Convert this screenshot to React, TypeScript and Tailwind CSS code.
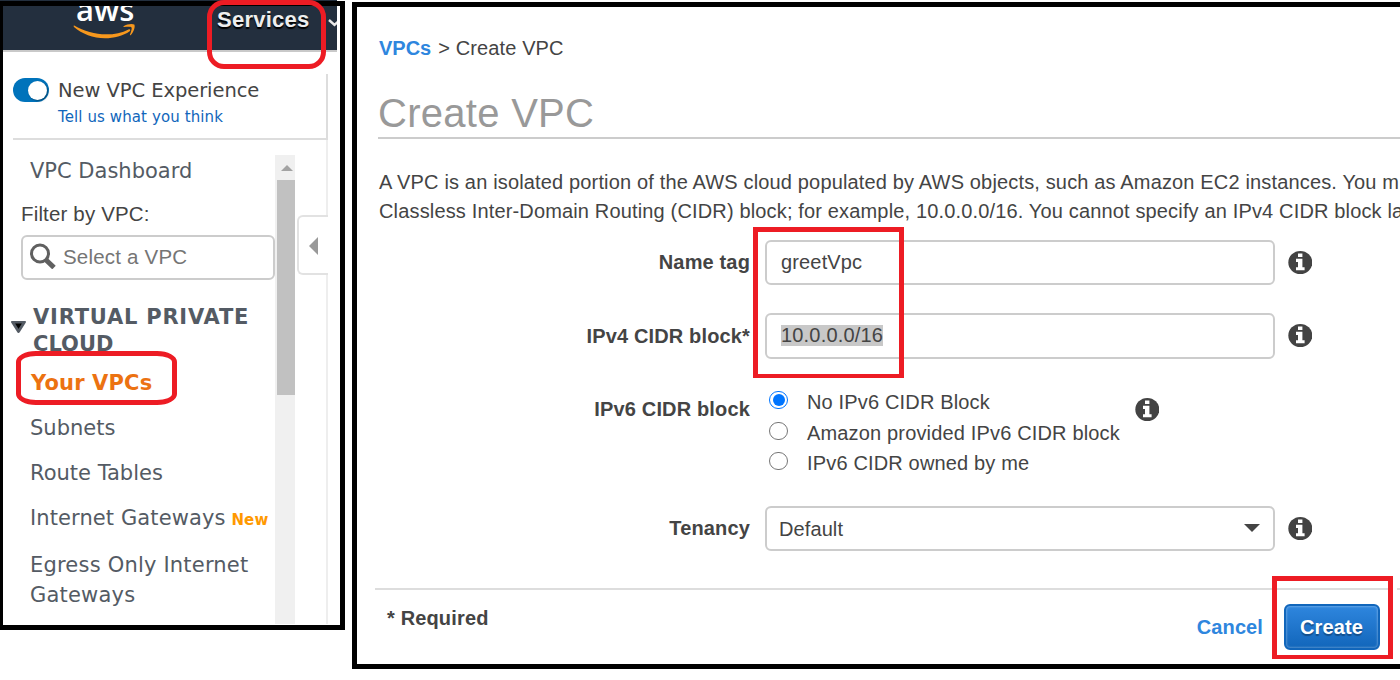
import type { ReactNode } from 'react';

function InfoIcon({ className = '' }: { className?: string }) {
  return (
    <svg className={`h-6 w-6 shrink-0 ${className}`} viewBox="0 0 24 24">
      <ellipse cx="12.300" cy="11.500" rx="12" ry="11.500" fill="#434343" />
      <path d="M10 2.400h4.400v3.600H10zM8 7.800h6.400v8.400H16.600V19.300H8v-3.100h2v-5.200H8z" fill="#fff" />
    </svg>
  );
}

function Highlight({ className }: { className: string }) {
  return <div className={`pointer-events-none absolute border-[5px] border-[#ed1c24] ${className}`} />;
}

function TopNav() {
  return (
    <header className="relative h-[46px] w-[334px] shrink-0 overflow-hidden border-b-2 border-[#c9c9c9] bg-[#232f3e]">
      <span className="absolute -top-[12px] left-[73px] font-['Open_Sans',sans-serif] text-[31px] leading-[30px] font-semibold text-white">
        aws
      </span>
      <svg className="absolute top-[16px] left-[70px] h-[18px] w-[64px]" viewBox="0 0 64 18">
        <path
          d="M1.2 3.6C18 14 41 15 55.500 7.400c1.600-.7 2.400.8 1.200 1.800C50 14 41 16.200 32 16.200 20 16.200 9 12 1 5 .4 4.200.7 3.400 1.200 3.600z"
          fill="#f7981d"
        />
        <path
          d="M50.600 4.300c3-2.200 8.500-2.900 10.700-1.800 1.200 2.200-.6 7.800-3.600 10.600-.5.400-1 .2-.8-.4.800-2.200 2.300-5.900 1.600-7.300-.8-1-4.800-.7-7.300-.4-.8.100-1.100-.3-.6-.7z"
          fill="#f7981d"
        />
      </svg>
      <span className="absolute top-0 left-[214px] font-['Liberation_Sans',sans-serif] text-[22px] leading-[27px] font-bold tracking-[0.250px] text-[#eee] [text-shadow:0_2px_1px_#000]">
        Services
      </span>
      <svg className="absolute top-[12px] left-[325px] h-[10px] w-[14px]" viewBox="0 0 14 10">
        <path d="M1 2l5.500 5L12 2" fill="none" stroke="#e8e8e8" strokeWidth="2.400" />
      </svg>
    </header>
  );
}

function NavItem({ children, className = '' }: { children: ReactNode; className?: string }) {
  return <a className={`block whitespace-nowrap text-[21px] leading-[30px] text-[#545b64] ${className}`}>{children}</a>;
}

function Sidebar() {
  return (
    <div className="flex h-[573px] w-[337px] font-['DejaVu_Sans',sans-serif]">
      <div className="flex w-[325px] shrink-0 flex-col">
        <div className="mt-[22px] ml-[10px] flex h-[66px] border-r-2 border-b-2 border-[#ddd]">
          <div className="mt-[4px] flex h-6 w-9 shrink-0 items-center justify-end rounded-full bg-[#0073bb] pr-[2px]">
            <div className="h-[19px] w-[19px] rounded-full bg-white shadow-[1px_1px_2px_rgba(0,0,0,0.4)]" />
          </div>
          <div className="ml-[9px]">
            <div className="mt-[5px] text-[19.500px] leading-6 tracking-[-0.060px] whitespace-nowrap text-[#444]">
              New VPC Experience
            </div>
            <a className="mt-[4px] block text-[15px] leading-5 tracking-[0.100px] text-[#1166bb]">Tell us what you think</a>
          </div>
        </div>
        <div className="flex grow">
          <nav className="w-[272px] shrink-0">
            <NavItem className="mt-[16px] ml-[27px]">VPC Dashboard</NavItem>
            <div className="mt-[16px] ml-[18px] font-['Liberation_Sans',sans-serif] text-[20.500px] leading-6 tracking-[0.160px] text-[#444]">
              Filter by VPC:
            </div>
            <div className="mt-[9px] ml-[18px] flex h-[45px] w-[254px] items-center rounded-[6px] border-2 border-[#ccc]">
              <svg className="mt-[-4px] ml-[7px] h-[26px] w-[26px]" viewBox="0 0 26 26">
                <circle cx="10" cy="10.500" r="8.500" fill="none" stroke="#606060" strokeWidth="3" />
                <path d="M15.500 16.500l8.500 8" stroke="#606060" strokeWidth="5" />
              </svg>
              <span className="ml-[7px] font-['Liberation_Sans',sans-serif] text-[20.500px] tracking-[0.200px] text-[#757575]">
                Select a VPC
              </span>
            </div>
            <div className="mt-[24px] flex">
              <svg className="mt-[17px] ml-[8px] h-[12px] w-[15px]" viewBox="0 0 15 12">
                <path d="M1.500 1h12L7.500 10.500z" fill="#000" stroke="#545b64" strokeWidth="2.800" strokeLinejoin="round" />
              </svg>
              <div className="ml-[7px] text-[21px] leading-[27px] font-bold text-[#545b64]">
                <div className="tracking-[0.780px] whitespace-nowrap">VIRTUAL PRIVATE</div>
                <div>CLOUD</div>
              </div>
            </div>
            <a className="mt-[10px] ml-[28px] block text-[21px] leading-[30px] font-bold tracking-[0.160px] text-[#ec7211]">
              Your VPCs
            </a>
            <NavItem className="mt-[15px] ml-[27px]">Subnets</NavItem>
            <NavItem className="mt-[15px] ml-[27px]">Route Tables</NavItem>
            <NavItem className="mt-[15px] ml-[27px] tracking-[0.100px]">
              Internet Gateways
              <b className="ml-[6px] text-[15px] text-[#ff9900]">New</b>
            </NavItem>
            <NavItem className="mt-[15px] ml-[27px] tracking-[0.200px]">
              Egress Only Internet
              <br />
              Gateways
            </NavItem>
          </nav>
          <div className="mt-[15px] mb-px flex w-5 flex-col bg-[#f0f0f0]">
            <svg className="mt-[10px] ml-[6px] h-[6px] w-[12px]" viewBox="0 0 12 6">
              <path d="M6 0l6 6H0z" fill="#a3a3a3" />
            </svg>
            <div className="mt-[9px] ml-[2px] h-[215px] bg-[#c1c1c1]" />
          </div>
          <div className="flex w-[33px] shrink-0 flex-col">
            <div className="h-[75px] border-r-2 border-[#eee]" />
            <div className="ml-[2px] flex h-[60px] items-center rounded-l-[6px] border-2 border-r-0 border-[#e2e2e2] pl-[10px]">
              <svg className="mt-px h-[18px] w-[9px]" viewBox="0 0 9 18">
                <path d="M9 0v18L0 9z" fill="#999" />
              </svg>
            </div>
            <div className="mb-px grow border-r-2 border-[#eee]" />
          </div>
        </div>
      </div>
    </div>
  );
}

function Field({ label, className, children }: { label: string; className: string; children: ReactNode }) {
  return (
    <div className={`flex items-center ${className}`}>
      <div className="mb-px w-[393px] shrink-0 text-right font-bold tracking-[0.150px]">{label}</div>
      <div className="ml-[15px] flex h-full w-[510px] shrink-0 items-center rounded-[6px] border-2 border-[#ccc]">
        {children}
      </div>
      <InfoIcon className="ml-[13px]" />
    </div>
  );
}

function Radio({ checked, children }: { checked?: boolean; children: ReactNode }) {
  return (
    <div className="flex h-[30.500px] items-start">
      <div
        className={`mt-[4px] flex h-[18px] w-[19px] shrink-0 items-center justify-center rounded-full border ${
          checked ? 'border-[1.500px] border-[#0075ff]' : 'border-[#767676]'
        }`}
      >
        {checked && <div className="h-[12px] w-[12px] rounded-full bg-[#0075ff]" />}
      </div>
      <span className="ml-[19px] leading-[30px] tracking-[0.160px] whitespace-nowrap">{children}</span>
    </div>
  );
}

function CreateVpc() {
  return (
    <main className="flex h-[667px] w-[1048px] flex-col overflow-hidden border-[5px] border-r-0 border-black bg-white font-['Liberation_Sans',sans-serif] text-[20px] leading-[30px] text-[#444]">
      <div className="mt-[26px] ml-[22px]">
        <b className="text-[#2e86de]">VPCs</b>
        <span className="ml-[7px] tracking-[0.120px]">&gt; Create VPC</span>
      </div>
      <h1 className="mt-[25px] ml-[21px] h-[51px] border-b-2 border-[#ccc] text-[40px] leading-[50px] tracking-[0.280px] text-[#999]">
        Create VPC
      </h1>
      <p className="mt-[29px] ml-[22px] h-[58px] text-[20px] leading-[29px] tracking-[0.155px] whitespace-nowrap">
        A VPC is an isolated portion of the AWS cloud populated by AWS objects, such as Amazon EC2 instances. You m
        <br />
        Classless Inter-Domain Routing (CIDR) block; for example, 10.0.0.0/16. You cannot specify an IPv4 CIDR block la
      </p>
      <Field label="Name tag" className="mt-[14px] h-[45px]">
        <span className="mb-px ml-[14px] tracking-[0.150px]">greetVpc</span>
      </Field>
      <Field label="IPv4 CIDR block*" className="mt-[28px] h-[46px]">
        <span className="mb-px ml-[14px] bg-[#c8c8c8] leading-[21px] tracking-[0.180px]">10.0.0.0/16</span>
      </Field>
      <div className="mt-[28px] flex h-[92px]">
        <div className="mt-[7px] w-[393px] shrink-0 text-right font-bold tracking-[0.150px]">IPv6 CIDR block</div>
        <div className="ml-[19px] w-[366px]">
          <Radio checked>No IPv6 CIDR Block</Radio>
          <Radio>Amazon provided IPv6 CIDR block</Radio>
          <Radio>IPv6 CIDR owned by me</Radio>
        </div>
        <InfoIcon className="mt-[11px]" />
      </div>
      <Field label="Tenancy" className="mt-[27px] h-[45px]">
        <span className="ml-[12px] grow tracking-[0.100px]">Default</span>
        <svg className="mr-[13px] mb-px h-[8px] w-[16px]" viewBox="0 0 16 8">
          <path d="M0 0h16L8 8z" fill="#444" />
        </svg>
      </Field>
      <div className="mt-[37px] ml-[18px] flex h-[2px] gap-[9px]">
        <div className="w-[1013px] bg-[#ddd]" />
        <div className="grow bg-[#ddd]" />
      </div>
      <div className="flex font-bold">
        <div className="mt-[13px] ml-[30px] tracking-[0.150px]">* Required</div>
        <a className="mt-[22px] ml-auto tracking-[0.100px] text-[#2e86de]">Cancel</a>
        <button className="mt-[14px] mr-5 ml-[21px] h-[46px] w-[96px] rounded-[6px] border-2 border-[#1166bb] bg-linear-to-b from-[#2e86de] to-[#1166bb] pr-px font-bold tracking-[0.100px] text-white shadow-[inset_0_0_2px_1px_rgba(255,255,255,0.25)] [text-shadow:0_2px_1px_rgba(0,0,0,0.3)]">
          Create
        </button>
      </div>
    </main>
  );
}

export default function App() {
  return (
    <div className="relative flex h-[680px] w-[1400px] gap-[7px] overflow-hidden bg-white">
      <aside className="h-[630px] w-[345px] shrink-0">
        <div className="h-px w-[337px] bg-[#232f3e]" />
        <div className="h-[629px] border-[5px] border-l-[3px] border-black bg-white">
          <TopNav />
          <Sidebar />
        </div>
      </aside>
      <div className="pt-[2px]">
        <CreateVpc />
      </div>
      <Highlight className="top-0 left-[207px] h-[69px] w-[119px] rounded-[17px]" />
      <Highlight className="top-[351px] left-[16px] h-[54px] w-[161px] [border-radius:20px/11px]" />
      <Highlight className="top-[227px] left-[753px] h-[151px] w-[151px] border-b-4" />
      <Highlight className="top-[576px] left-[1272px] h-[83px] w-[121px] border-b-4" />
    </div>
  );
}
